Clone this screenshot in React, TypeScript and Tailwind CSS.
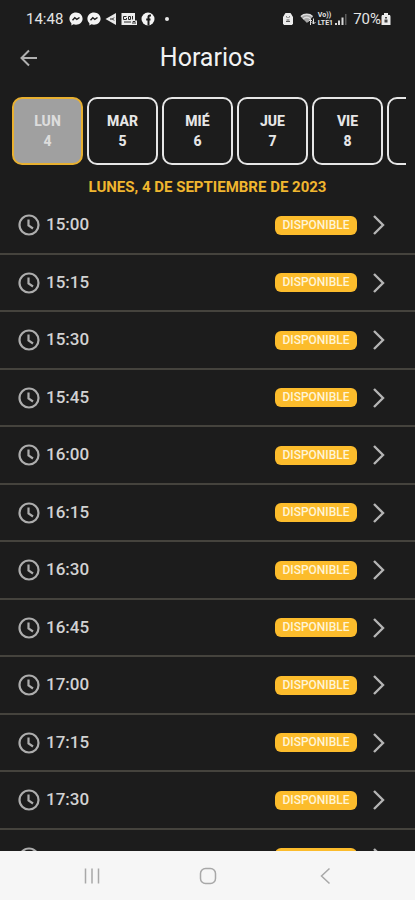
import React, { useState } from 'react'

interface Day {
    name: string
    date: number
}

const days: Day[] = [
    { name: 'LUN', date: 4 },
    { name: 'MAR', date: 5 },
    { name: 'MIÉ', date: 6 },
    { name: 'JUE', date: 7 },
    { name: 'VIE', date: 8 },
    { name: 'SÁB', date: 9 },
]

const slots = [
    '15:00',
    '15:15',
    '15:30',
    '15:45',
    '16:00',
    '16:15',
    '16:30',
    '16:45',
    '17:00',
    '17:15',
    '17:30',
    '17:45',
]

const MessengerIcon = () => (
    <svg viewBox="0 0 14 14" className="w-3.5 h-3.5">
        <path
            d="M7 .6C3.2.6.4 3.3.4 6.8c0 1.8.8 3.4 2 4.4v2.2l2-1.1c.8.2 1.7.4 2.6.4 3.800 0 6.600-2.600 6.600-5.900S10.800.6 7 .6z"
            fill="#f4f4f4"
        />
        <path
            d="M3.5 8.3l2.3-2.5 2 1.5 2.700-1.800"
            fill="none"
            stroke="#1c1c1c"
            strokeWidth="1.4"
        />
    </svg>
)

const ShareIcon = () => (
    <svg viewBox="0 0 12 14" className="w-3 h-3.5">
        <path d="M.5 7L11 1v12z" fill="#e8e8e8" />
        <path
            d="M5 7h2.500M7.500 7L9 5.500M7.500 7L9 8.500"
            stroke="#1c1c1c"
            strokeWidth="1"
        />
    </svg>
)

const NewsIcon = () => (
    <svg viewBox="0 0 16 14" className="w-4 h-3.5">
        <path d="M.5 1H14v7.500h2V13H.5z" fill="#ededed" />
        <path
            d="M5.500 4.500h-3v3h3V6M7.500 4.500h2v3h-2zM11.500 4v3.500M3 10h7M12 12V9.500h2V12"
            fill="none"
            stroke="#2a2a2a"
            strokeWidth="1"
        />
    </svg>
)

const FacebookIcon = () => (
    <svg viewBox="0 0 14 14" className="w-3.5 h-3.5">
        <circle cx="7" cy="7" r="6.5" fill="#f4f4f4" />
        <path
            d="M10 3.600H8.800c-.9 0-1.300.5-1.300 1.300v8.600M5.200 7.400h4.300"
            fill="none"
            stroke="#1c1c1c"
            strokeWidth="2"
        />
    </svg>
)

const AlarmIcon = () => (
    <svg viewBox="0 0 12 14" className="w-3 h-3.5">
        <path
            d="M3.500 1h5l1 1.500L11 5v6.500L10 13H2l-1-1.500V5l1.500-2.500z"
            fill="#ececec"
        />
        <path
            d="M4 4.500l1.500 1M8 4.500l-1.500 1M4 9.500h4M4.500 8h3"
            stroke="#555"
            strokeWidth="1"
        />
    </svg>
)

const WifiIcon = () => (
    <svg viewBox="0 0 16 14" className="w-4 h-3.5">
        <path d="M.5 4.500C4 1 9.500 1 13 4.500L7 11z" fill="#a8a8a8" />
        <path
            d="M1 4.500C4 1.500 9.500 1.500 12.500 4.500M3 7c2.200-2 5.300-2 7.500 0"
            fill="none"
            stroke="#dedede"
            strokeWidth="1.4"
        />
        <path
            d="M10.500 13V7.500M8.500 9.500l2-2 2 2M13.500 6.500V12M11.500 10l2 2 2-2"
            fill="none"
            stroke="#dedede"
            strokeWidth="1"
        />
    </svg>
)

const SignalIcon = () => (
    <svg viewBox="0 0 12 14" className="w-3 h-3.5">
        <path
            d="M0 11h2v2H0zM3 8.500h2V13H3zM6.500 5.500h2V13h-2z"
            fill="#d8d8d8"
        />
        <path d="M10 2h1.500v11H10z" fill="#5c5c5c" />
    </svg>
)

const BatteryIcon = () => (
    <svg viewBox="0 0 10 14" className="w-2.5 h-3.5">
        <path d="M3 1h4v2h2l.5 1.500V13H.5V4.500L1 3h2z" fill="#ececec" />
        <path d="M3.500 7.500h3v3h-3zM4 5h2v1.500H4z" fill="#444" />
    </svg>
)

const StatusBar = () => (
    <div className="h-9 shrink-0 pl-[26px] pr-6 pt-0.5 flex items-center justify-between text-[15px] text-[#e4e4e4]">
        <div className="flex items-center gap-1">
            <span className="mr-0.5">14:48</span>
            <MessengerIcon />
            <MessengerIcon />
            <ShareIcon />
            <NewsIcon />
            <FacebookIcon />
            <span className="w-1 h-1 ml-1.5 rounded-full bg-[#e8e8e8]"></span>
        </div>
        <div className="flex items-center gap-0.5">
            <AlarmIcon />
            <span className="ml-1">
                <WifiIcon />
            </span>
            <span className="text-[7px] leading-[8px] font-bold">
                Vo))
                <br />
                LTE1
            </span>
            <SignalIcon />
            <span className="ml-1 flex items-center">
                70%
                <BatteryIcon />
            </span>
        </div>
    </div>
)

const ClockIcon = () => (
    <svg
        viewBox="0 0 22 22"
        className="w-[22px] h-[22px]"
        fill="none"
        stroke="#adadad"
        strokeWidth="2.2"
    >
        <circle cx="11" cy="11" r="9.5" />
        <path d="M10.500 5.500v6l4.500 3" />
    </svg>
)

const SlotRow = ({ time }: { time: string }) => (
    <li className="odd:h-[58px] even:h-[57px] shrink-0 border-b-2 border-[#45433d]">
        <button
            type="button"
            className="w-full h-full flex items-center pl-[18px] pr-[30px]"
        >
            <ClockIcon />
            <span className="ml-1.5 text-[17px] font-medium text-[#d2d2d2]">
                {time}
            </span>
            <span className="ml-auto w-[82px] h-[19px] rounded-md bg-[#fcbc2c] text-xs leading-[19px] font-medium text-[#fff4d6] text-center">
                DISPONIBLE
            </span>
            <svg
                viewBox="0 0 12 22"
                className="w-3 h-[22px] ml-4"
                fill="none"
                stroke="#b4b4b4"
                strokeWidth="2.4"
            >
                <path d="M1 2l9 9-9 9" />
            </svg>
        </button>
    </li>
)

const NavBar = () => (
    <nav className="h-[49px] shrink-0 bg-[#f6f6f6] grid grid-cols-3 pl-[34px] pr-8">
        <button
            type="button"
            aria-label="Recientes"
            className="flex items-center justify-center"
        >
            <svg viewBox="0 0 18 18" className="w-[18px] h-[18px]">
                <path
                    d="M2.500 1.500v15M9 1.500v15M15.500 1.500v15"
                    stroke="#a8a8a8"
                    strokeWidth="1.5"
                />
            </svg>
        </button>
        <button
            type="button"
            aria-label="Inicio"
            className="flex items-center justify-center"
        >
            <svg viewBox="0 0 18 18" className="w-[18px] h-[18px]">
                <rect
                    x="1.5"
                    y="1.5"
                    width="15"
                    height="15"
                    rx="5"
                    fill="none"
                    stroke="#a8a8a8"
                    strokeWidth="1.5"
                />
            </svg>
        </button>
        <button
            type="button"
            aria-label="Atrás"
            className="flex items-center justify-center"
        >
            <svg viewBox="0 0 18 18" className="w-[18px] h-[18px]">
                <path
                    d="M13.500 1.500L5.500 9l8 7.500"
                    fill="none"
                    stroke="#a8a8a8"
                    strokeWidth="1.5"
                />
            </svg>
        </button>
    </nav>
)

export default function App() {
    const [selected, setSelected] = useState(4)

    return (
        <div className="h-screen flex flex-col overflow-hidden bg-[#1c1c1c] font-[Roboto,sans-serif]">
            <StatusBar />

            <header className="h-11 shrink-0 px-5 grid grid-cols-[24px_1fr_24px] items-center">
                <button type="button" aria-label="Volver">
                    <svg
                        viewBox="0 0 18 18"
                        className="w-[18px] h-[18px]"
                        fill="none"
                        stroke="#b0b0b0"
                        strokeWidth="2"
                    >
                        <path d="M17 9H2M9 1.500L1.500 9 9 16.500" />
                    </svg>
                </button>
                <h1 className="text-[25px] text-[#f2f2f2] text-center">
                    Horarios
                </h1>
            </header>

            {/* Days */}
            <div className="mt-[17px] ml-3 mr-[9px] flex gap-1 shrink-0 overflow-hidden">
                {days.map((day) => (
                    <button
                        key={day.date}
                        type="button"
                        onClick={() => setSelected(day.date)}
                        className={`w-[71px] h-[68px] shrink-0 rounded-[10px] border-2 text-sm leading-5 font-extrabold ${
                            selected === day.date
                                ? 'border-[#e8b030] bg-[#a0a0a0] text-[#dcdcdc]'
                                : 'border-[#e6e6e6] text-[#e6e6e6]'
                        }`}
                    >
                        <div>{day.name}</div>
                        <div>{day.date}</div>
                    </button>
                ))}
            </div>

            <h2 className="mt-3 shrink-0 text-[15px] leading-5 font-bold text-[#f0b62f] text-center">
                LUNES, 4 DE SEPTIEMBRE DE 2023
            </h2>

            {/* Slots */}
            <ul className="flex-1 min-h-0 overflow-hidden flex flex-col">
                {slots.map((time) => (
                    <SlotRow key={time} time={time} />
                ))}
            </ul>

            <NavBar />
        </div>
    )
}
